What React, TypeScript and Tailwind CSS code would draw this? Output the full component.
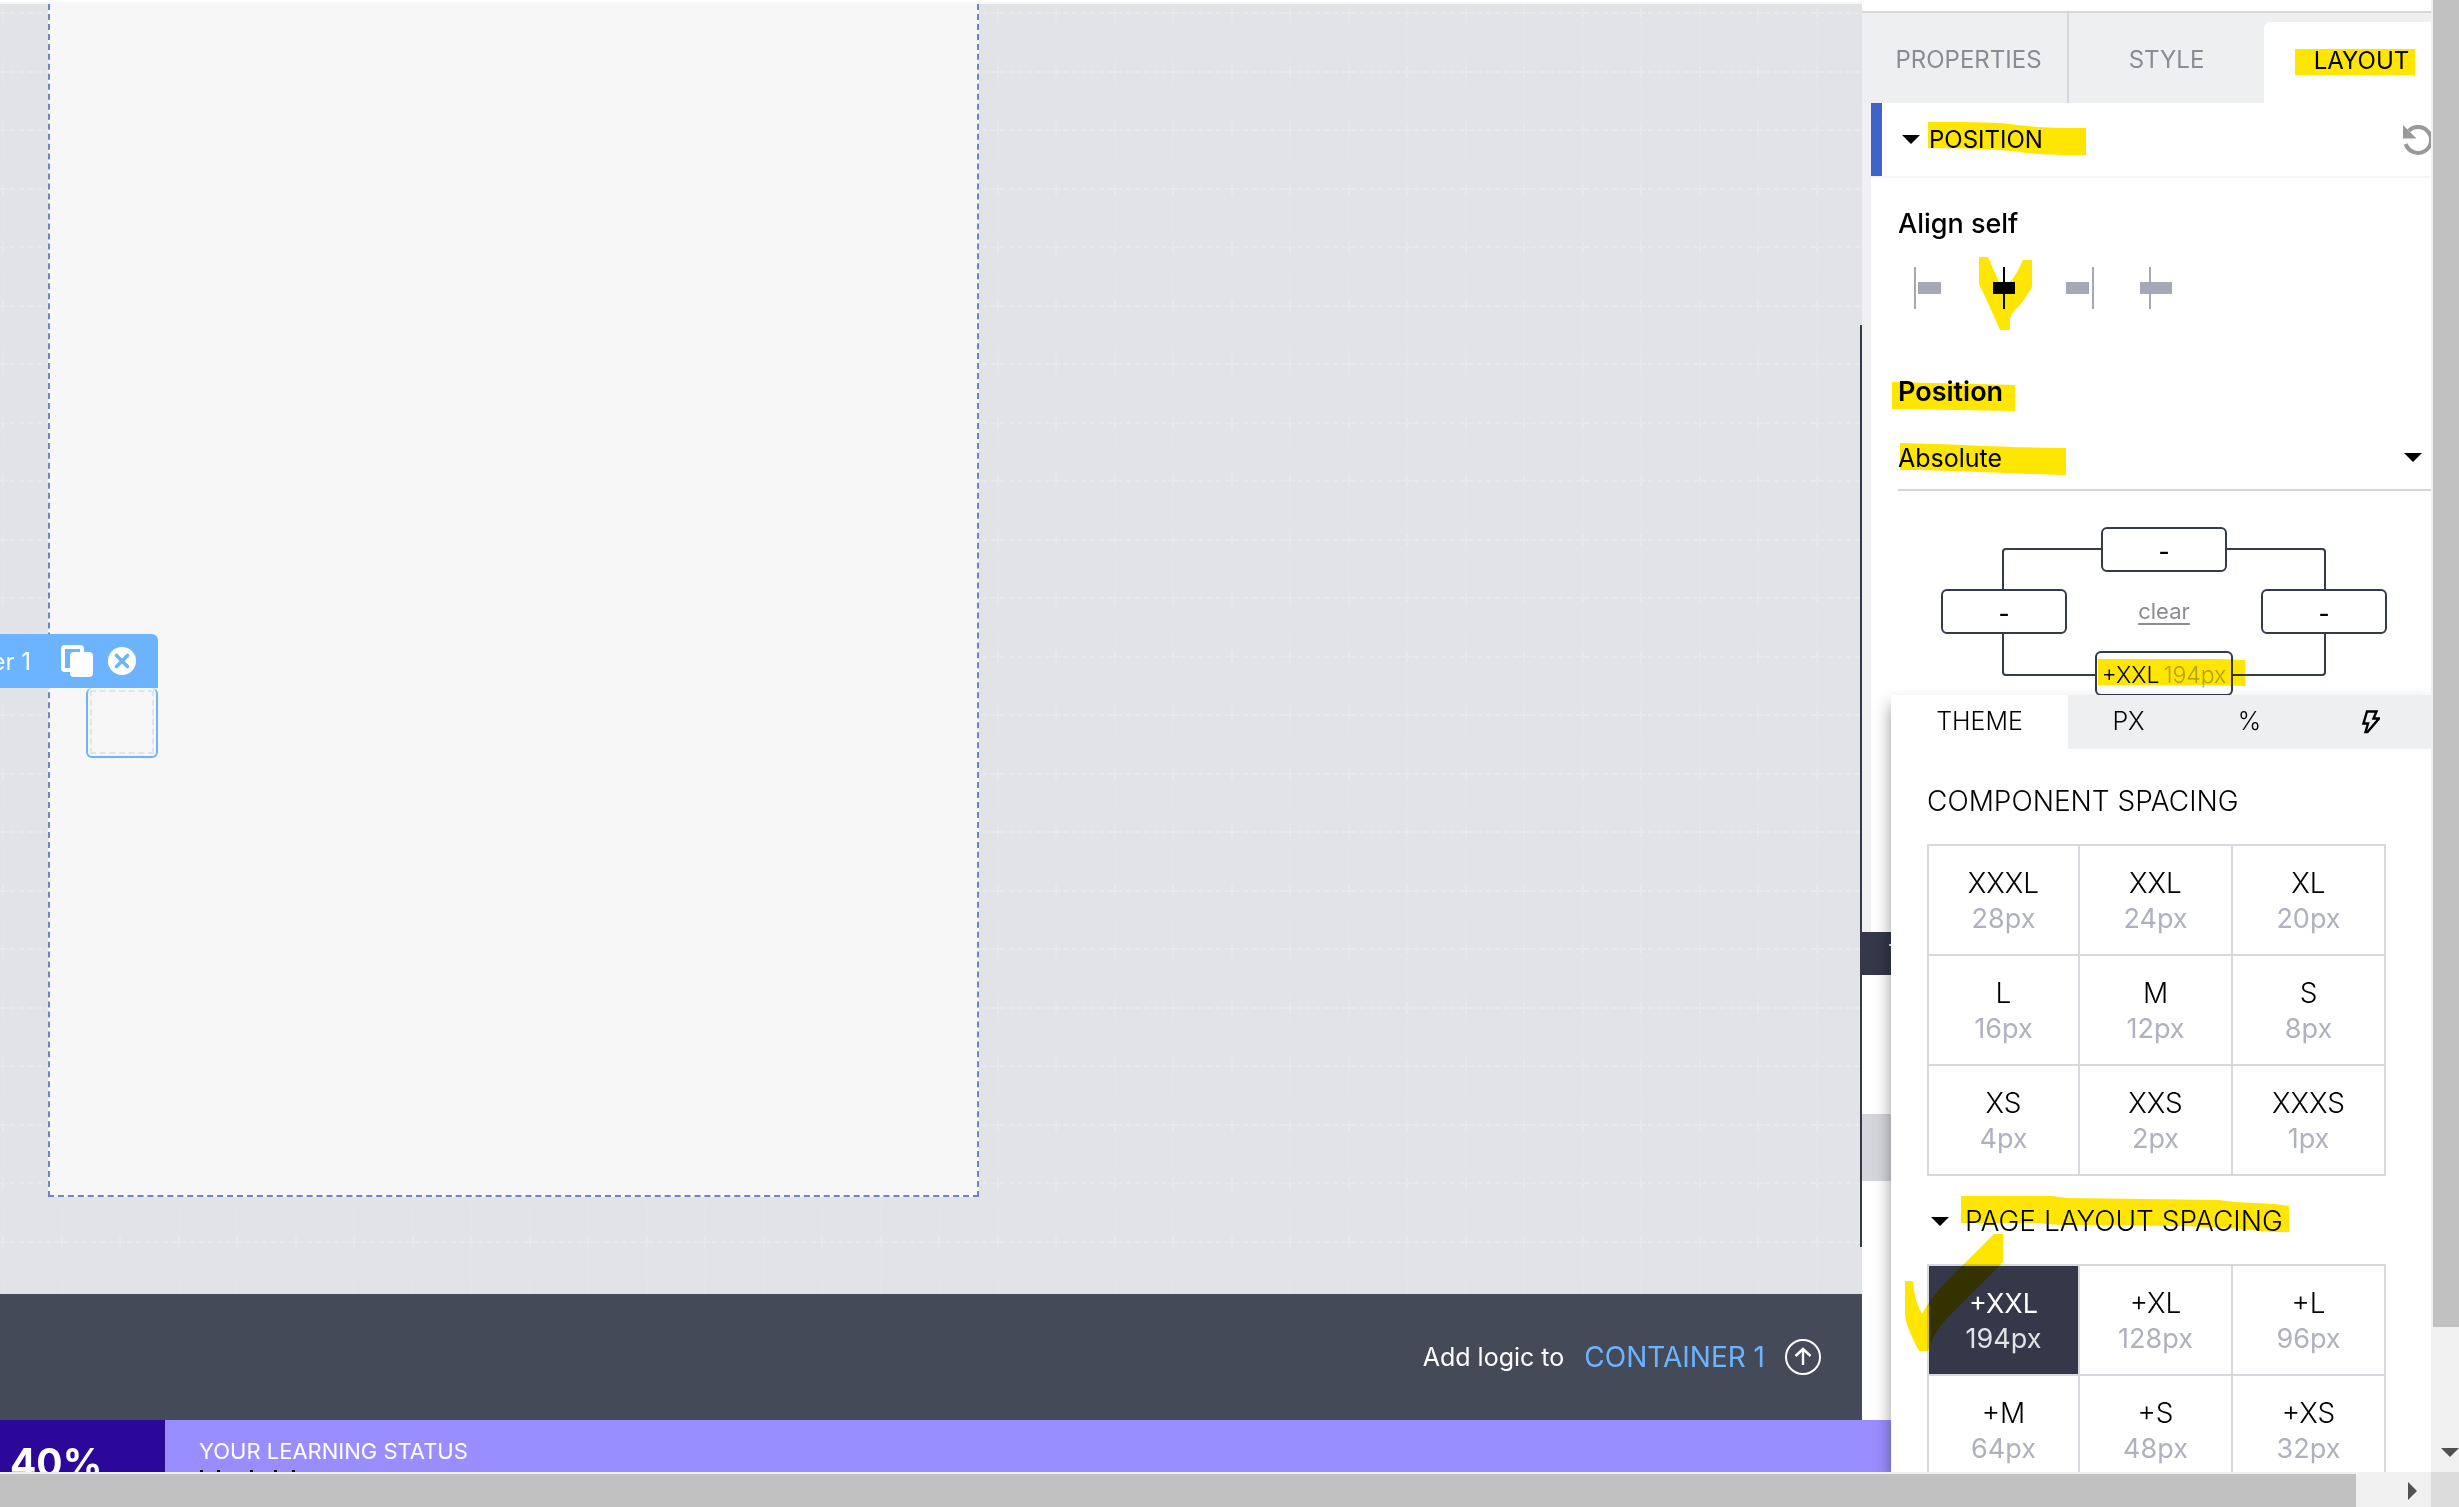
import type { ReactNode } from "react";

type Spacing = { name: string; size: string; selected?: boolean };

const componentSpacing: Spacing[] = [
  { name: "XXXL", size: "28px" },
  { name: "XXL", size: "24px" },
  { name: "XL", size: "20px" },
  { name: "L", size: "16px" },
  { name: "M", size: "12px" },
  { name: "S", size: "8px" },
  { name: "XS", size: "4px" },
  { name: "XXS", size: "2px" },
  { name: "XXXS", size: "1px" },
];

const pageSpacing: Spacing[] = [
  { name: "+XXL", size: "194px", selected: true },
  { name: "+XL", size: "128px" },
  { name: "+L", size: "96px" },
  { name: "+M", size: "64px" },
  { name: "+S", size: "48px" },
  { name: "+XS", size: "32px" },
];

function Caret() {
  return (
    <svg className="pointer-events-none h-[9px] w-[18px] shrink-0" viewBox="0 0 18 9" aria-hidden="true">
      <path d="M0 0H18L9 9Z" fill="#000" />
    </svg>
  );
}

/* ---------- Canvas ---------- */

function CanvasGrid() {
  return (
    <svg className="absolute inset-0 h-full w-full" aria-hidden="true">
      <defs>
        <pattern id="grid" width="117" height="117" patternUnits="userSpaceOnUse" x="-26" y="-20">
          <g stroke="#e8e8e9" strokeWidth="2" fill="none">
            <path d="M0 29H117M0 88H117" strokeDasharray="5 4" />
            <path d="M29 0V117M88 0V117" strokeDasharray="5 4" strokeOpacity="0.5" />
            <path d="M24 29h10M29 24v10M83 29h10M88 24v10M24 88h10M29 83v10M83 88h10M88 83v10" />
          </g>
        </pattern>
      </defs>
      <rect width="100%" height="100%" fill="url(#grid)" />
    </svg>
  );
}

function SelectionToolbar() {
  return (
    <div className="absolute top-[630px] left-[-120px] flex h-[54px] w-[278px] items-center justify-end rounded-tr-md bg-[#6cb4ff] pr-[22px] text-white">
      <span className="mr-[30px] pt-0.5 text-[24px] whitespace-nowrap">Container 1</span>
      <button type="button" aria-label="Duplicate" className="mr-[15px]">
        <svg className="h-8 w-8" viewBox="0 0 32 32" aria-hidden="true">
          <path d="M10 25H4Q2 25 2 23V4Q2 2 4 2H19Q21 2 21 4V8" fill="none" stroke="#fff" strokeWidth="4" />
          <rect x="9" y="7" width="23" height="25" rx="4" fill="#fff" />
        </svg>
      </button>
      <button type="button" aria-label="Remove">
        <svg className="h-7 w-7" viewBox="0 0 28 28" aria-hidden="true">
          <circle cx="14" cy="14" r="14" fill="#fff" />
          <path d="M8.5 8.5L19.5 19.5M19.5 8.5L8.5 19.5" stroke="#6cb4ff" strokeWidth="3.6" strokeLinecap="round" />
        </svg>
      </button>
    </div>
  );
}

function Canvas() {
  return (
    <main className="relative flex-1 overflow-hidden border-t-2 border-[#f7f7f7] bg-[#e2e3e6]">
      <CanvasGrid />
      <div className="relative ml-12 h-[1193px] w-[931px] border-2 border-t-0 border-dashed border-[#6b86c4] bg-[#f7f7f7]" />
      <div className="absolute top-[684px] left-[86px] h-[70px] w-[72px] rounded-md border-2 border-t-0 border-[#6cb4ff] p-0.5">
        <div className="h-full w-full border-2 border-dashed border-[#dfe6ea]" />
      </div>
      <SelectionToolbar />
      <div className="absolute top-[321px] right-0 h-[922px] w-0.5 bg-[#343849]" />
    </main>
  );
}

function LogicBar() {
  return (
    <div className="flex h-[126px] items-center justify-end bg-[#454a58] pr-[41px] text-white">
      <span className="mr-5 pt-0.5 text-[25px]">Add logic to</span>
      <a href="#container-1" className="mr-5 text-[28px] text-[#6cb4ff]">
        CONTAINER 1
      </a>
      <button type="button" aria-label="Open logic">
        <svg className="h-9 w-9" viewBox="0 0 36 36" fill="none" stroke="#fff" aria-hidden="true">
          <circle cx="18" cy="18" r="17" strokeWidth="2" />
          <path d="M18 26V10.5M10.5 17L18 10L25.5 17" strokeWidth="2.4" />
        </svg>
      </button>
    </div>
  );
}

function StatusBar() {
  return (
    <footer className="flex h-[52px] shrink-0 overflow-hidden bg-[#998eff]">
      <div className="w-[165px] bg-[#2b079a] pt-[23px] pl-[10px] text-[39px] leading-10 font-bold text-white">40%</div>
      <div className="pt-[19px] pl-[34px]">
        <p className="text-[22px] leading-6 text-white">YOUR LEARNING STATUS</p>
        <div className="mt-[7px] flex pl-px" aria-hidden="true">
          <i className="mr-3.5 h-1 w-[3px] bg-black" />
          <i className="mr-[30px] h-1 w-[3px] bg-black" />
          <i className="mr-[21px] h-1 w-[3px] bg-black" />
          <i className="mr-[15px] h-1 w-[3px] bg-black" />
          <i className="h-1 w-[3px] bg-black" />
        </div>
      </div>
    </footer>
  );
}

/* ---------- Layout panel ---------- */

function PanelTabs() {
  return (
    <nav className="mt-[11px] flex h-[92px] shrink-0 overflow-hidden border-t-2 border-[#d5d7db] bg-[#eeeff1] text-[24px] text-[#8a8b93]">
      <button type="button" className="ml-2 w-[199px] shrink-0 border-r-2 border-[#d5d7db] pt-1">
        PROPERTIES
      </button>
      <button type="button" className="w-[195px] shrink-0 pt-1">
        STYLE
      </button>
      <button type="button" className="mt-[9px] w-[195px] shrink-0 rounded-tl-md bg-white pb-1 text-black">
        LAYOUT
      </button>
    </nav>
  );
}

function AlignButton({ label, active, children }: { label: string; active?: boolean; children: ReactNode }) {
  return (
    <button
      type="button"
      aria-label={label}
      aria-pressed={active ?? false}
      className={active ? "w-[76px] text-black" : "w-[76px] text-[#a7a8b6]"}
    >
      <svg className="h-[42px] w-[76px]" viewBox="0 0 76 42" fill="currentColor" aria-hidden="true">
        {children}
      </svg>
    </button>
  );
}

const boxClass =
  "relative flex h-[45px] w-[126px] items-center justify-center rounded-md border-2 border-[#343a4c] bg-white pt-1 text-[24px] font-medium";

function PositionDiagram() {
  return (
    <div className="relative mt-9 ml-[43px] flex w-[446px] flex-col gap-[17px]">
      <div className="absolute inset-x-[61px] top-[21px] bottom-5 rounded border-2 border-[#343a4c]" />
      <div className="flex justify-center">
        <button type="button" aria-label="Top offset" className={boxClass}>
          -
        </button>
      </div>
      <div className="flex items-center justify-between">
        <button type="button" aria-label="Left offset" className={boxClass}>
          -
        </button>
        <button type="button" className="text-[22px] text-[#8a8b93] underline underline-offset-4">
          clear
        </button>
        <button type="button" aria-label="Right offset" className={boxClass}>
          -
        </button>
      </div>
      <div className="flex justify-center">
        <button
          type="button"
          className="relative flex h-[45px] w-[138px] items-center justify-center gap-1 rounded-md border-2 border-[#343a4c] bg-white pt-[3px] text-[23px] font-light whitespace-nowrap"
        >
          <span>+XXL</span>
          <span className="text-[#b0b1bf]">194px</span>
        </button>
      </div>
    </div>
  );
}

function PositionSection() {
  return (
    <section className="h-[829px] shrink-0 border-l-[9px] border-[#f0f0f2]">
      <div className="flex h-[75px] items-center overflow-hidden border-b-2 border-[#f5f5f5]">
        <div className="mr-5 w-[11px] self-stretch bg-[#4063cb]" />
        <button type="button" className="flex items-center gap-[9px] text-[24px]">
          <Caret />
          POSITION
        </button>
        <button type="button" aria-label="Reset position" className="-mr-0.5 ml-auto shrink-0">
          <svg className="h-[30px] w-[30px]" viewBox="0 0 30 30" aria-hidden="true">
            <path d="M5.8 5.8A13 13 0 1 1 2.7 19" fill="none" stroke="#999" strokeWidth="4" />
            <path d="M0 0V13.5H13.5Z" fill="#999" />
          </svg>
        </button>
      </div>
      <div className="pt-7 pl-[27px]">
        <h3 className="text-[27px] leading-9 font-medium">Align self</h3>
        <div className="mt-[25px] -ml-2.5 flex">
          <AlignButton label="Align start">
            <path d="M26 0h2v42h-2zM30 15h23v12H30z" />
          </AlignButton>
          <AlignButton label="Align center" active>
            <path d="M39 0h2v42h-2zM29 15h22v12H29z" />
          </AlignButton>
          <AlignButton label="Align end">
            <path d="M52 0h2v42h-2zM26 15h23v12H26z" />
          </AlignButton>
          <AlignButton label="Stretch">
            <path d="M33 0h2v42h-2zM24 15h32v12H24z" />
          </AlignButton>
        </div>
        <label htmlFor="position-mode" className="mt-[65px] block text-[27px] leading-9 font-semibold">
          Position
        </label>
        <div className="mt-4 flex h-[65px] items-center border-b-2 border-[#d5d6db] pr-[9px]">
          <select
            id="position-mode"
            defaultValue="Absolute"
            className="-mr-[18px] h-full flex-1 appearance-none bg-transparent pt-0.5 text-[25px]"
          >
            <option>Absolute</option>
            <option>Relative</option>
          </select>
          <Caret />
        </div>
        <PositionDiagram />
      </div>
    </section>
  );
}

function LayoutPanel() {
  return (
    <aside className="flex w-[569px] shrink-0 flex-col overflow-hidden bg-white">
      <PanelTabs />
      <PositionSection />
      <div className="flex h-[43px] shrink-0 items-center bg-[#343848] pl-[26px] text-[24px] text-white">T</div>
      <div className="mt-[139px] h-[67px] shrink-0 bg-[#d5d6db]" />
    </aside>
  );
}

/* ---------- Spacing picker ---------- */

function SpacingGrid({ items }: { items: Spacing[] }) {
  return (
    <div className="grid grid-cols-[151px_1fr_1fr] border-t-2 border-l-2 border-[#d8d9de]">
      {items.map((s) => (
        <button
          key={s.name}
          type="button"
          aria-pressed={s.selected ?? false}
          className={
            s.selected
              ? "flex h-[110px] flex-col items-center justify-center border-r-2 border-b-2 border-[#d8d9de] bg-[#343849] pt-0.5 leading-[35px] text-white"
              : "flex h-[110px] flex-col items-center justify-center border-r-2 border-b-2 border-[#d8d9de] pt-0.5 leading-[35px]"
          }
        >
          <span className={s.selected ? "text-[27px]" : "text-[28px] font-light"}>{s.name}</span>
          <span className={s.selected ? "text-[27px] text-[#e1e1e6]" : "text-[27px] text-[#b0b1bf]"}>{s.size}</span>
        </button>
      ))}
    </div>
  );
}

function SpacingPicker() {
  return (
    <div className="absolute top-[695px] right-0 bottom-0 w-[540px] bg-white shadow-[0_10px_16px_rgba(0,0,0,0.4)]">
      <div className="flex h-[54px] text-[25px] font-light">
        <button type="button" className="w-[177px] bg-white">
          THEME
        </button>
        <div className="grid flex-1 grid-cols-3 bg-[#eeeff1]">
          <button type="button">PX</button>
          <button type="button">%</button>
          <button type="button" aria-label="Dynamic value" className="flex items-center justify-center">
            <svg className="h-6 w-[18px]" viewBox="0 0 18 24" fill="none" stroke="#000" strokeWidth="2.4" aria-hidden="true">
              <path d="M5 1.5H14.5L11.5 8.5H17L5.5 22H3.5L6 13.5H1.5Z" />
            </svg>
          </button>
        </div>
      </div>
      <div className="pt-[34px] pr-[45px] pl-9">
        <h4 className="mb-[25px] text-[28px] leading-9 font-light">COMPONENT SPACING</h4>
        <SpacingGrid items={componentSpacing} />
        <button type="button" className="mt-[27px] mb-[25px] ml-1 flex h-9 items-center gap-4 text-[28px] leading-9 font-light">
          <Caret />
          PAGE LAYOUT SPACING
        </button>
        <SpacingGrid items={pageSpacing} />
      </div>
    </div>
  );
}

function MarkerStrokes() {
  return (
    <svg
      className="pointer-events-none absolute top-0 right-0 h-[1472px] w-[569px] mix-blend-multiply"
      viewBox="1862 0 569 1472"
      fill="#ffe600"
      aria-hidden="true"
    >
      <path d="M2295 49H2415V75H2295Z" />
      <path d="M1928 122C1960 122 1990 122 2010 124C2030 127 2050 128 2086 128V155C2060 155 2040 155 2020 152C1990 148 1965 149 1928 148Z" />
      <path d="M1979 257H1988L1999 282H2010Q2017 274 2023 260H2032V287Q2023 303 2015 310Q2011 314 2010 318V330H2000L1988 303L1979 284Z" />
      <path d="M1892 382L2015 385V411L1892 409Z" />
      <path d="M1900 443C1960 444 2010 448 2066 448V475C2010 474 1960 470 1900 470Z" />
      <path d="M2098 659H2220L2245 660V686L2200 685H2098Z" />
      <path d="M1961 1196H2052L2067 1198L2219 1200L2235 1202L2275 1204L2289 1206V1232H2271L2230 1228L2184 1226L2060 1225L2036 1223H1961Z" />
      <path d="M1905 1281H1913Q1914 1300 1922 1314Q1929 1300 1945 1283L1994 1234H2003V1262L1947 1318Q1932 1336 1928 1351H1919Q1905 1325 1905 1313Z" />
    </svg>
  );
}

/* ---------- Scrollbars ---------- */

function VerticalScrollbar() {
  return (
    <div className="flex w-7 shrink-0 flex-col bg-[#f0f0f0] pl-0.5">
      <div className="h-[90.15%] bg-[#c1c1c1]" />
      <svg className="mt-auto mb-[15px] ml-2 h-[9px] w-[18px]" viewBox="0 0 18 9" aria-hidden="true">
        <path d="M0 0H18L9 9Z" fill="#505050" />
      </svg>
    </div>
  );
}

function HorizontalScrollbar() {
  return (
    <div className="flex h-[35px] shrink-0">
      <div className="flex flex-1 items-center bg-[#f0f0f0] pt-0.5">
        <div className="h-full w-[96.9%] bg-[#c1c1c1]" />
        <svg className="mr-3.5 ml-auto h-[18px] w-[9px]" viewBox="0 0 9 18" aria-hidden="true">
          <path d="M0 0V18L9 9Z" fill="#505050" />
        </svg>
      </div>
      <div className="w-7 bg-[#dcdcdc]" />
    </div>
  );
}

export default function App() {
  return (
    <div className="flex h-screen w-full flex-col overflow-hidden bg-white font-['Inter',sans-serif] text-black">
      <div className="flex min-h-0 flex-1">
        <div className="relative isolate flex min-w-0 flex-1 flex-col overflow-hidden bg-white">
          <div className="flex min-h-0 flex-1">
            <div className="flex min-w-0 flex-1 flex-col pt-0.5">
              <Canvas />
              <LogicBar />
            </div>
            <LayoutPanel />
          </div>
          <StatusBar />
          <SpacingPicker />
          <MarkerStrokes />
        </div>
        <VerticalScrollbar />
      </div>
      <HorizontalScrollbar />
    </div>
  );
}
